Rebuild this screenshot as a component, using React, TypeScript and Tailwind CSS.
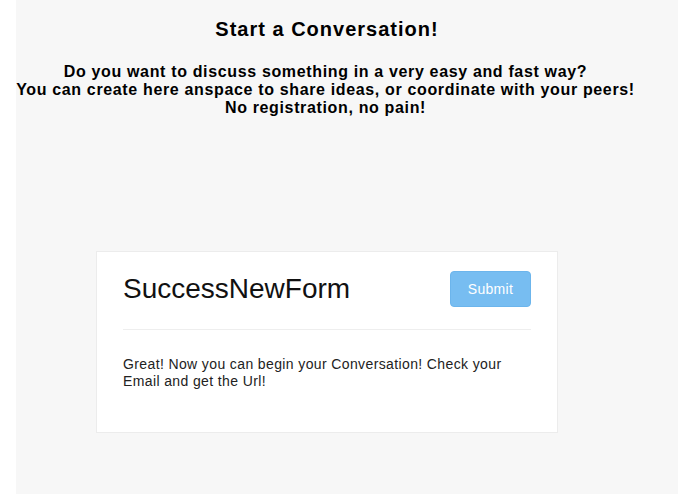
export default function App() {
  return (
    <div
      className="min-h-[494px] bg-white"
      style={{ fontFamily: '"Liberation Sans", Arial, sans-serif' }}
    >
      <div className="ml-[16px] w-[662px] min-h-[494px] bg-[#f7f7f7]">
        <div className="-ml-[14px] w-[650px] flex flex-col items-center text-black">
          <h1 className="mt-[17px] text-[20px] font-bold leading-[24px] tracking-[1px]">
            Start a Conversation!
          </h1>
          <div className="-ml-[3px] mt-[22px] text-[16px] font-bold leading-[18px] tracking-[0.65px] text-center whitespace-nowrap">
            Do you want to discuss something in a very easy and fast way?
            <br />
            You can create here anspace to share ideas, or coordinate with your peers!
            <br />
            No registration, no pain!
          </div>
          <div className="mt-[134px] w-[462px] h-[182px] bg-white border border-[#ececec] px-[26px]">
            <div className="flex items-center justify-between pt-[19px] pb-[22px] border-b border-[#eeeeee]">
              <span className="text-[28px] leading-[36px] text-[#111]">SuccessNewForm</span>
              <button className="w-[81px] h-[36px] rounded-[4px] bg-[#77bdf1] border border-[#6cb5ec] text-white text-[14px] tracking-[0.3px]">
                Submit
              </button>
            </div>
            <p className="mt-[26px] text-[14px] leading-[17px] tracking-[0.38px] text-[#222]">
              Great! Now you can begin your Conversation! Check your Email and get the Url!
            </p>
          </div>
        </div>
      </div>
    </div>
  );
}
